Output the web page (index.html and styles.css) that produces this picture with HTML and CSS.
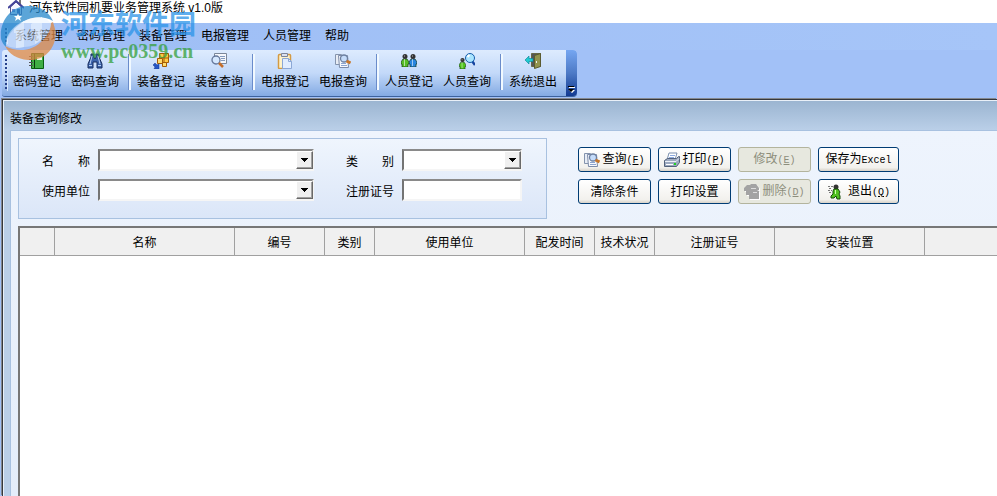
FILE: index.html
```html
<!DOCTYPE html>
<html lang="zh-CN">
<head>
  <meta charset="UTF-8">
  <meta name="viewport" content="width=device-width, initial-scale=1.0">
  <title>河东软件园机要业务管理系统 v1.0版</title>
  <link rel="stylesheet" href="styles.css">
</head>
<body>

  <!-- Icons used more than once -->
  <svg class="sprite" aria-hidden="true">
    <symbol id="icon-find-doc" viewBox="0 0 16 16">
      <path d="M.5 1.500h6v10h-6z" fill="#e8edf5" stroke="#8594ad"/>
      <path d="M3.500 2.500h9l1 12h-9z" fill="#f7f9fd" stroke="#7c8ba8"/>
      <path d="M6 10.500h5M6 12.500h6" stroke="#8ba4d0"/>
      <circle cx="9" cy="5.500" r="3.500" fill="#c5dcfa" stroke="#6d80a0" stroke-width="1.300"/>
      <path d="M11.500 8l4 2" stroke="#c7762a" stroke-width="3"/>
    </symbol>
    <symbol id="icon-person" viewBox="0 0 8 13">
      <path d="M2 5h4l2 3v2H7v3H1v-3H0V8z" stroke="#143714" stroke-width=".7"/>
      <path d="M3.500 5v7" stroke="#fff" stroke-opacity=".55"/>
      <circle cx="4" cy="2.500" r="2.500" fill="#333"/>
      <path d="M3 2h1" stroke="#bbb"/>
    </symbol>
    <symbol id="icon-arrow" viewBox="0 0 7 4">
      <path d="M0 0h7v1H6v1H5v1H4v1H3V3H2V2H1V1H0z"/>
    </symbol>
  </svg>

  <!-- Title bar -->
  <header class="title-bar">
    <svg class="app-icon" viewBox="0 0 16 16">
      <path d="M12 0v5" fill="none" stroke="#777" stroke-width="2"/>
      <path d="M2.500 7v7.500h11V7L8 2z" fill="#f4f6ff" stroke="#55558a"/>
      <path d="M0 8l8-7 8 7" fill="none" stroke="#43439a" stroke-width="2"/>
      <path d="M9 9h3v6H9z" fill="#43539a"/>
      <path d="M4 9h3v3H4z" fill="#6a86d0"/>
    </svg>
    <h1>河东软件园机要业务管理系统 v1.0版</h1>
  </header>

  <!-- Main menu -->
  <nav class="menu-bar">
    <span class="grip"></span>
    <a href="#">系统管理</a>
    <a href="#">密码管理</a>
    <a href="#">装备管理</a>
    <a href="#">电报管理</a>
    <a href="#">人员管理</a>
    <a href="#">帮助</a>
  </nav>

  <!-- Toolbar -->
  <div class="tool-row">
    <div class="toolbar">
      <span class="grip"></span>
      <div class="tool-group">
        <button class="tool">
          <svg viewBox="0 0 16 16"><path d="M2.500.5h12v15h-12z" fill="#3fae45" stroke="#075f10"/><path d="M5.500 1v14" stroke="#083c0c"/><path d="M8 4h5v3H8z" fill="#e9f7e4"/><path d="M0 3.500h4M0 6.500h4M0 9.500h4M0 12.500h4" stroke="#555"/></svg>
          密码登记
        </button>
        <button class="tool">
          <svg viewBox="0 0 16 16"><path d="M4 1h3v3l1 2 1-2V1h3v3l3 7v4h-5V9H6v6H1v-4l3-7z" fill="#3c62aa" stroke="#172c5e"/><path d="M5 3L3 11M11 3l2 8M2 12.500h3M11 12.500h3" stroke="#b9d0f5"/></svg>
          密码查询
        </button>
      </div>
      <div class="tool-group">
        <button class="tool">
          <svg viewBox="0 0 16 16"><path d="M6.500.5h9v9h-9z" fill="#ffca45" stroke="#a45b05"/><path d="M11 .5v9M6.500 5h9" stroke="#a45b05"/><path d="M4.500 5.500h5v5h-5zM9.500 9.500h4v4h-4z" fill="#ffdc6b" stroke="#a45b05"/><path d="M6 10v5l-2-1-2 2-2-2 2-2-1-2z" transform="rotate(90 3 13)" fill="#2655c5" stroke="#173c94" stroke-width=".5"/></svg>
          装备登记
        </button>
        <button class="tool">
          <svg viewBox="0 0 16 16"><path d="M3.500.5h12v10h-12z" fill="#f6f8fc" stroke="#7b8799"/><path d="M9 3.500h5M10 5.500h4M10 7.500h4" stroke="#8299bd"/><circle cx="5" cy="7" r="4" fill="#d5e8ff" stroke="#65779a" stroke-width="1.300"/><path d="M8 10l4 4" stroke="#c56e2a" stroke-width="2.500"/></svg>
          装备查询
        </button>
      </div>
      <div class="tool-group">
        <button class="tool">
          <svg viewBox="0 0 16 16"><rect x="1.500" y="1.500" width="12" height="14" rx="1" fill="#fff3ca" stroke="#d39a43" stroke-width="1.500"/><path d="M4.500.5h6v3h-6z" fill="#dce2ef" stroke="#7b849a"/><path d="M5.500 5.500h6l3 3v7h-9z" fill="#e1edff" stroke="#8ca8d6"/><path d="M11.500 5.500v3h3" fill="none" stroke="#8ca8d6"/></svg>
          电报登记
        </button>
        <button class="tool">
          <svg><use href="#icon-find-doc"/></svg>
          电报查询
        </button>
      </div>
      <div class="tool-group">
        <button class="tool">
          <svg viewBox="0 0 16 16"><use href="#icon-person" x="0" y="1" width="8" height="13" fill="#57bd26"/><use href="#icon-person" x="8" y="1" width="8" height="13" fill="#2885df"/></svg>
          人员登记
        </button>
        <button class="tool">
          <svg viewBox="0 0 16 16"><path d="M13 8l3 4" stroke="#1744a0" stroke-width="2.500"/><circle cx="11" cy="5" r="4.500" fill="#a9e5ff" stroke="#165cab"/><path d="M8.500 4l2-2" stroke="#fff" stroke-width="2"/><use href="#icon-person" x="0" y="5" width="7" height="11" fill="#50c51d"/></svg>
          人员查询
        </button>
      </div>
      <div class="tool-group">
        <button class="tool">
          <svg viewBox="0 0 16 16"><path d="M6.500.5h9v13h-9z" fill="#555" stroke="#686848"/><path d="M9.500 2.500l6-2v13l-6 2z" fill="#92934d" stroke="#5b5b31"/><path d="M11.500 8v2" stroke="#eee"/><path d="M0 7l4-4v2.500h4v3H4V11z" fill="#20cbd1" stroke="#087e91" stroke-width=".6"/></svg>
          系统退出
        </button>
      </div>
      <button class="toolbar-more" aria-label="更多">
        <svg viewBox="0 0 7 7"><path d="M1 1h6v1H1zM1 4h6L4 7z" fill="#fff"/><path d="M0 0h6v1H0zM0 3h6L3 6z" fill="#000"/></svg>
      </button>
    </div>
  </div>

  <!-- Query window -->
  <main class="workspace">
    <h2>装备查询修改</h2>
    <div class="panel">
      <div class="query-row">
        <form class="query-form">
          <div class="field">
            <label for="name">名　　称</label>
            <div class="combo">
              <select id="name"><option></option></select>
              <span class="combo-arrow"><svg><use href="#icon-arrow"/></svg></span>
            </div>
          </div>
          <div class="field short">
            <label for="category">类　　别</label>
            <div class="combo">
              <select id="category"><option></option></select>
              <span class="combo-arrow"><svg><use href="#icon-arrow"/></svg></span>
            </div>
          </div>
          <div class="field">
            <label for="unit">使用单位</label>
            <div class="combo">
              <select id="unit"><option></option></select>
              <span class="combo-arrow"><svg><use href="#icon-arrow"/></svg></span>
            </div>
          </div>
          <div class="field short">
            <label for="reg-no">注册证号</label>
            <input type="text" id="reg-no">
          </div>
        </form>

        <div class="actions">
          <button class="btn"><svg><use href="#icon-find-doc"/></svg><span>查询<kbd>(<u>F</u>)</kbd></span></button>
          <button class="btn">
            <svg viewBox="0 0 16 16"><path d="M5 1h8l-2 7H3z" fill="#fff" stroke="#7b8fae"/><path d="M6 3.500h5M5 5.500h5" stroke="#8dabe0"/><path d="M.5 8.500l3-2h9l2-2h1v6l-3 4H.5z" fill="#9daac0" stroke="#53627b"/><path d="M1 9.500h11l3-3" fill="none" stroke="#edf1f8"/><path d="M2 12.500h7" stroke="#fff"/><path d="M10 11h2v2h-2z" fill="#21d321"/></svg>
            <span>打印<kbd>(<u>P</u>)</kbd></span>
          </button>
          <button class="btn" disabled><span>修改<kbd>(<u>E</u>)</kbd></span></button>
          <button class="btn"><span>保存为<kbd>Excel</kbd></span></button>
          <button class="btn"><span>清除条件</span></button>
          <button class="btn"><span>打印设置</span></button>
          <button class="btn" disabled>
            <svg viewBox="0 0 16 16"><path d="M3 1h3l1-1h5l3 4v2h-2l2 1v8H5v-4H2V7H0V4z" transform="translate(1 1)" fill="#fff"/><path d="M3 1h3l1-1h5l3 4v2h-2l2 1v8H5v-4H2V7H0V4z" fill="#a3a3a3"/><path d="M7 4.500h5M9 8.500h4" stroke="#ddd"/></svg>
            <span>删除<kbd>(<u>D</u>)</kbd></span>
          </button>
          <button class="btn exit">
            <svg viewBox="0 0 16 16"><path d="M1 2.500h5M2 4.500h3M1 6.500h4M2 8.500h3" stroke="#777" stroke-dasharray="2 1"/><circle cx="9" cy="3" r="2.500" fill="#333"/><path d="M7 5h4l2 3-1 2 1 2v3h-3l-1-3-2 2H4v-2l2-2V7z" fill="#52c321" stroke="#164d0b"/><path d="M8.500 6v4" stroke="#ccffab"/></svg>
            <span>退出<kbd>(<u>Q</u>)</kbd></span>
          </button>
        </div>
      </div>

      <!-- Result list -->
      <div class="grid-box">
        <table class="grid">
          <colgroup>
            <col class="w35"><col class="w180"><col class="w90"><col class="w50"><col class="w150"><col class="w70"><col class="w60"><col class="w120"><col class="w150"><col>
          </colgroup>
          <thead>
            <tr>
              <th></th>
              <th>名称</th>
              <th>编号</th>
              <th>类别</th>
              <th>使用单位</th>
              <th>配发时间</th>
              <th>技术状况</th>
              <th>注册证号</th>
              <th>安装位置</th>
              <th></th>
            </tr>
          </thead>
          <tbody></tbody>
        </table>
      </div>
    </div>
  </main>

  <!-- Site watermark -->
  <div class="watermark">
    <svg viewBox="0 0 56 56">
      <path d="M1 34C-1 14 13 0 29 1c11 0 20 6 24 15C41 9 26 12 15 23 9 29 6 34 6 42 3 39 2 37 1 34z" fill="#2588cc"/>
      <path d="M55 24c3 18-10 32-27 31C17 54 9 49 5 41c13 7 28 5 38-6 5-5 7-10 8-17l2-1z" fill="#e08a45"/>
      <path d="M14 24l10-8v26l-8 1V28h-2zM31 19l11-7v22l-7 5V24h-4z" fill="#fff" fill-opacity=".9"/>
      <path d="M6 40C5 30 14 20 24 16v26c-7 2-13 1-18-2zM24 16c10-5 20-5 27 2 0 12-13 24-27 24z" fill="#e6f1ff" fill-opacity=".6"/>
      <path d="M18 8l1 3 3 0-2 2 1 3-3-2-3 2 1-3-2-2h3z" fill="#fff"/>
    </svg>
    <div class="watermark-text">
      <strong>河东软件园</strong>
      <em>www.pc0359.cn</em>
    </div>
  </div>

</body>
</html>
```

FILE: styles.css
```css
* {
  box-sizing: border-box;
}
body {
  display: flex;
  flex-direction: column;
  min-height: 100vh;
  margin: 0;
  background-color: #a2c1f7;
  font-family: "Liberation Sans", "Noto Sans CJK SC", sans-serif;
  font-size: 12px;
  line-height: 16px;
  color: #000;
}
button, input, select {
  font: inherit;
  color: inherit;
}
h1, h2 {
  margin: 0;
  font-size: 12px;
  font-weight: normal;
}
.sprite {
  position: absolute;
  width: 0;
  height: 0;
}

/* Title bar */
.title-bar {
  display: flex;
  align-items: flex-start;
  gap: 5px;
  height: 23px;
  padding-left: 8px;
  background-color: #fff;
}
.app-icon {
  width: 16px;
  height: 16px;
}

/* Menu and toolbar */
.menu-bar {
  display: flex;
  align-items: center;
  gap: 14px;
  height: 27px;
  padding: 0 5px 2px;
  background: linear-gradient(to right, #9ebef5, #a6c5f8);
}
.menu-bar .grip {
  height: 16px;
  margin-right: -7px;
}
.menu-bar a {
  color: #000;
  text-decoration: none;
}
.grip {
  width: 3px;
  background: repeating-linear-gradient(to bottom, #27418c 0, #27418c 2px, transparent 2px, transparent 4px);
  border-right: 1px solid #d5e5fc;
}
.tool-row {
  display: flex;
  padding-left: 2px;
}
.toolbar {
  display: flex;
  height: 47px;
  padding-left: 3px;
  border-bottom: 1px solid #3b619c;
  border-radius: 3px 4px 4px 3px;
  background: linear-gradient(#ddebfe, #c3d9f9 50%, #83aae3);
}
.toolbar .grip {
  height: 36px;
  margin-top: 5px;
}
.tool-group {
  display: flex;
  position: relative;
  padding-right: 8px;
}
.tool-group:nth-last-child(2) {
  padding-right: 4px;
}
.tool-group:not(:nth-last-child(2))::after {
  content: "";
  position: absolute;
  top: 4px;
  right: 1px;
  width: 2px;
  height: 36px;
  border-left: 1px solid #6a8ccb;
  background-color: #f1f9ff;
}
.tool {
  display: flex;
  flex-direction: column;
  align-items: center;
  gap: 5px;
  width: 58px;
  padding: 3px 0 0;
  border: none;
  background: none;
  white-space: nowrap;
}
.tool svg, .btn svg {
  flex: none;
  width: 16px;
  height: 16px;
}
.toolbar-more {
  display: flex;
  align-items: flex-end;
  width: 11px;
  padding: 0 2px 3px;
  border: none;
  border-radius: 0 4px 4px 0;
  background: linear-gradient(#75a6f1, #4d7ac6 50%, #123a92);
}
.toolbar-more svg {
  width: 7px;
  height: 7px;
}

/* Query window */
.workspace {
  display: flex;
  flex: 1;
  flex-direction: column;
  margin: 2px 0 0 2px;
  padding-left: 6px;
  border-top: 1px solid #35383d;
  border-left: 1px solid #35383d;
  box-shadow: -1px -1px #84888e, inset 1px 1px #e9f0f8;
  background: linear-gradient(#9ab4d0, #bacfe8 30px);
}
.workspace h2 {
  height: 30px;
  padding: 11px 0 0 1px;
}
.panel {
  display: flex;
  flex: 1;
  flex-direction: column;
  gap: 7px;
  margin-left: 1px;
  padding: 7px 0 0 7px;
  border-top: 1px solid #a8c1e0;
  border-left: 1px solid #a8c1e0;
  background: linear-gradient(#eef4fd, #e4edfa);
}
.query-row {
  display: flex;
  align-items: flex-start;
  gap: 31px;
}
.query-form {
  display: grid;
  grid-template-columns: auto auto;
  gap: 8px 32px;
  padding: 10px 24px 17px 23px;
  border: 1px solid #a8c1e0;
  background: linear-gradient(#eff5fd, #dbe6f8);
}
.field {
  display: flex;
  align-items: center;
  gap: 8px;
}
.field label {
  width: 48px;
  padding-top: 4px;
  white-space: nowrap;
}
.combo {
  display: grid;
}
.combo select, .combo-arrow {
  grid-area: 1 / 1;
}
.field select, .field input {
  width: 216px;
  height: 22px;
  padding: 0 4px;
  border: 2px solid;
  border-color: #8a8a8a #f5f5f5 #f5f5f5 #747474;
  border-radius: 0;
  outline: none;
  background-color: #fff;
  appearance: none;
}
.field.short select, .field.short input {
  width: 120px;
}
.combo-arrow {
  display: flex;
  align-items: center;
  justify-content: center;
  align-self: center;
  justify-self: end;
  width: 17px;
  height: 18px;
  margin-right: 1px;
  border: 1px solid;
  border-color: #fff #696969 #696969 #fff;
  box-shadow: inset -1px -1px #a0a0a0;
  background-color: #f0f0f0;
  pointer-events: none;
}
.combo-arrow svg {
  width: 7px;
  height: 4px;
}

/* Buttons */
.actions {
  display: grid;
  grid-template-columns: 73px 73px 73px 81px;
  gap: 7px;
  padding-top: 9px;
}
.btn {
  display: flex;
  align-items: center;
  justify-content: center;
  gap: 2px;
  height: 25px;
  padding: 0;
  border: 1px solid #003c74;
  border-radius: 3px;
  background: linear-gradient(#fff, #f2f1ed 85%, #d8d2c8);
  white-space: nowrap;
}
.btn.exit {
  gap: 5px;
}
.btn:disabled {
  border-color: #b3b49d;
  background: #e7e8df;
  color: #8d8e7c;
}
.btn kbd {
  font-family: "Liberation Mono", monospace;
  font-size: 10px;
}

/* Result list */
.grid-box {
  flex: 1;
  border-top: 2px solid #777;
  border-left: 2px solid #777;
  background-color: #fff;
}
.grid {
  width: 100%;
  table-layout: fixed;
  border-collapse: separate;
  border-spacing: 0;
}
.grid th {
  height: 28px;
  padding: 2px 0 0;
  border-right: 1px solid #a0a0a0;
  border-bottom: 1px solid #a0a0a0;
  background-color: #f0f0f0;
  font-weight: normal;
  white-space: nowrap;
}
.grid th:last-child {
  border-right: none;
}
.w35 { width: 35px; }
.w50 { width: 50px; }
.w60 { width: 60px; }
.w70 { width: 70px; }
.w90 { width: 90px; }
.w120 { width: 120px; }
.w150 { width: 150px; }
.w180 { width: 180px; }

/* Watermark */
.watermark {
  position: absolute;
  top: 5px;
  left: 0;
  display: flex;
  gap: 5px;
  opacity: 0.75;
  pointer-events: none;
}
.watermark svg {
  width: 56px;
  height: 56px;
}
.watermark-text {
  display: flex;
  flex-direction: column;
  padding-top: 4px;
}
.watermark strong {
  font-size: 27px;
  line-height: 32px;
  color: #2a93e8;
}
.watermark em {
  font-family: "Liberation Serif", serif;
  font-size: 20px;
  font-style: normal;
  font-weight: bold;
  line-height: 20px;
  color: #35a03c;
}
```
